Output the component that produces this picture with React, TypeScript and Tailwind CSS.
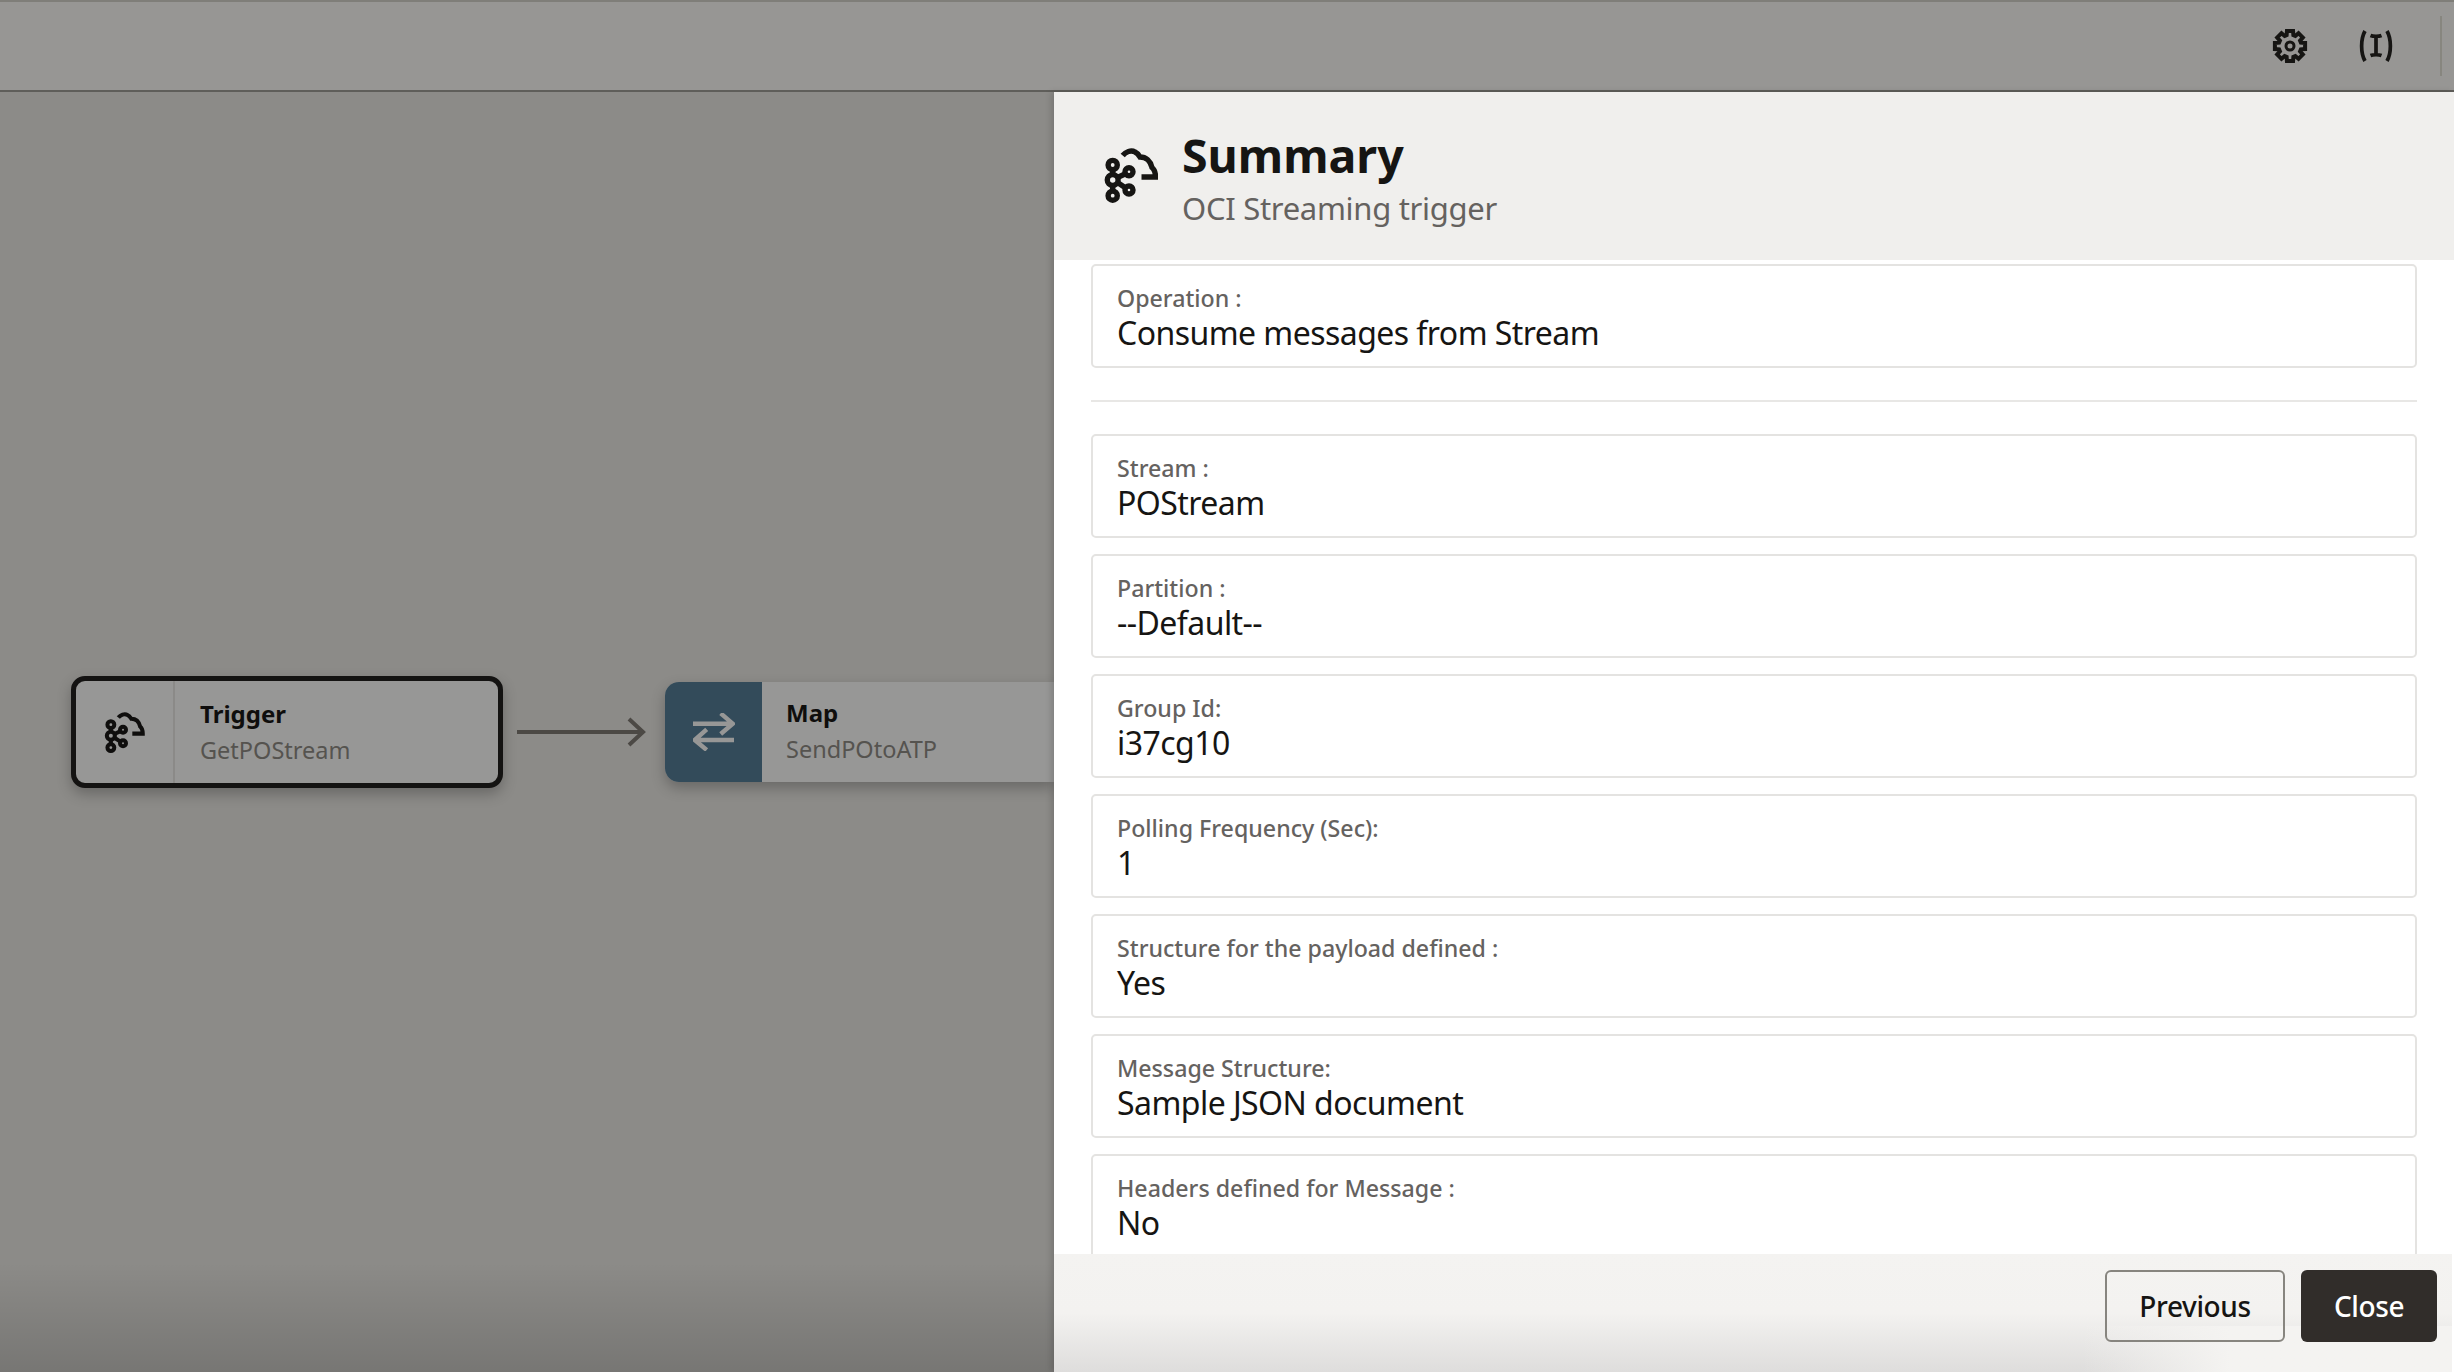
import React from 'react';

const fields = [
  { label: 'Stream :', value: 'POStream' },
  { label: 'Partition :', value: '--Default--' },
  { label: 'Group Id:', value: 'i37cg10' },
  { label: 'Polling Frequency (Sec):', value: '1' },
  { label: 'Structure for the payload defined :', value: 'Yes' },
  { label: 'Message Structure:', value: 'Sample JSON document' },
  { label: 'Headers defined for Message :', value: 'No' },
];

// eight teeth round the centre of a 36 box
const gearPath = Array.from({ length: 8 }, (_, i) => {
  const a = (i * Math.PI) / 4;
  const pt = (r: number, d: number) =>
    `${(18 + r * Math.sin(a + d)).toFixed(2)} ${(18 - r * Math.cos(a + d)).toFixed(2)}`;
  return `${i === 0 ? 'M' : 'L'}${pt(11.4, -0.3)}L${pt(15.4, -0.2)}L${pt(15.4, 0.2)}L${pt(11.4, 0.3)}`;
}).join('') + 'Z';

const StreamIcon = ({ className }: { className: string }) => (
  <svg viewBox="0 0 54 55" fill="none" stroke="currentColor" strokeWidth="5.4" className={className}>
    <circle cx="8.7" cy="17" r="4.6" />
    <circle cx="8.7" cy="32" r="5.4" />
    <circle cx="8.7" cy="47.7" r="4.6" />
    <circle cx="25" cy="23.7" r="4" />
    <circle cx="25" cy="42" r="4" />
    <path d="M8.7 21.5V26.5M8.7 37.5V43M13.5 29.5L21 26M13.5 34.5L21 39.5" />
    <path d="M18.7 7.5C21.5 4 27 1.5 31 4C34 5.5 35 7.5 36 9C42 9 46.5 13 48 19.5C51 22 51.5 26 51.5 29H37.5" />
  </svg>
);

const GearIcon = () => (
  <svg viewBox="0 0 36 36" className="h-9 w-9 text-[#161513]" fill="none" stroke="currentColor">
    <path d={gearPath} strokeWidth="4" strokeLinejoin="miter" />
    <circle cx="18" cy="18" r="4" strokeWidth="3" />
  </svg>
);

const VariableIcon = () => (
  <svg viewBox="0 0 36 34" className="h-[34px] w-9 text-[#161513]" fill="none" stroke="currentColor" strokeWidth="3.7">
    <path d="M7 2C2.5 10 2.5 24 7 32" />
    <path d="M29 2C33.5 10 33.5 24 29 32" />
    <path d="M12.5 6.5C15 7.5 21 7.5 23.5 6.5M18 6.5V26.5M12.5 26.5C15 25.5 21 25.5 23.5 26.5" />
  </svg>
);

const MapIcon = () => (
  <svg viewBox="0 0 42 38" className="h-[38px] w-[42px] text-[#979796]" fill="none" stroke="currentColor" strokeWidth="4.4">
    <path d="M0 10.7H38M27.7 0.3L39.7 10.7L27.7 21" />
    <path d="M41 27H3M13.7 16.3L1.7 27L13.7 37" />
  </svg>
);

const Field = ({ label, value }: { label: string; value: string }) => (
  <div className="h-[104px] shrink-0 rounded-[5px] border-2 border-[#e4e3e1] bg-white px-6 pt-[17px]">
    <div className="text-[23.2px] font-medium leading-[30px] text-[#65625f]">{label}</div>
    <div className="text-[32px] leading-[39px] tracking-[-0.55px] text-[#161513]">{value}</div>
  </div>
);

export default function App() {
  return (
    <div className="flex h-screen w-full flex-col overflow-hidden bg-[#8c8b88] font-['Noto_Sans',sans-serif]">
      <header className="flex h-[92px] shrink-0 items-center justify-end border-y-2 border-t-[#7f7e79] border-b-[#5f5e5a] bg-[#979694]">
        <GearIcon />
        <div className="ml-[50px]"><VariableIcon /></div>
        <div className="ml-[46px] mr-[12px] h-[60px] w-[2px] bg-[#87867f]" />
      </header>

      <div className="flex min-h-0 flex-1">
        {/* Canvas */}
        <div className="relative min-w-0 flex-1 bg-[#8c8b88]">
          <div className="absolute left-[71px] top-[584px] flex h-[112px] w-[432px] rounded-[14px] border-[5px] border-[#141312] bg-[#979796] shadow-[0_6px_14px_rgba(0,0,0,0.25)]">
            <div className="flex w-[99px] shrink-0 items-center justify-center border-r-2 border-[#8b8a88]">
              <StreamIcon className="h-[41px] w-[41px] text-[#0f0e0d]" />
            </div>
            <div className="pl-[25px] pt-[15px]">
              <div className="text-[24px] font-bold leading-[36px] text-[#0f0e0d]">Trigger</div>
              <div className="text-[23.5px] leading-[36px] text-[#55534f]">GetPOStream</div>
            </div>
          </div>

          <svg viewBox="0 0 130 30" fill="none" className="absolute left-[517px] top-[625px] h-[30px] w-[130px] text-[#4c4945]" stroke="currentColor" strokeWidth="4">
            <path d="M0 15H126M112 2L126 15L112 28" />
          </svg>

          <div className="absolute left-[665px] top-[590px] flex h-[100px] w-[389px] overflow-hidden rounded-l-[14px] bg-[#979796] shadow-[0_6px_14px_rgba(0,0,0,0.25)]">
            <div className="flex w-[97px] shrink-0 items-center justify-center bg-[#334b5a]">
              <MapIcon />
            </div>
            <div className="pl-[24px] pt-[13px]">
              <div className="text-[24px] font-bold leading-[36px] text-[#0f0e0d]">Map</div>
              <div className="text-[23.5px] leading-[36px] text-[#55534f]">SendPOtoATP</div>
            </div>
          </div>

          {/* darkening along the bottom of the canvas */}
          <div className="absolute inset-x-0 bottom-0 h-[110px] bg-gradient-to-b from-transparent to-black/15" />
        </div>

        {/* Summary drawer */}
        <aside className="z-10 flex w-[1400px] shrink-0 flex-col bg-white shadow-[-3px_0_6px_rgba(0,0,0,0.15)]">
          <div className="flex h-[168px] shrink-0 bg-[#f0efed] pl-[50px] pt-[56px]">
            <StreamIcon className="h-[55px] w-[54px] shrink-0 text-[#161513]" />
            <div className="ml-[24px] -mt-[24px]">
              <div className="text-[46.5px] font-bold leading-[62px] text-[#161513]">Summary</div>
              <div className="text-[31px] leading-[44px] tracking-[-0.3px] text-[#65625f]">OCI Streaming trigger</div>
            </div>
          </div>

          <div className="flex min-h-0 flex-1 flex-col overflow-hidden pl-[37px] pr-[37px] pt-[4px]">
            <Field label="Operation :" value="Consume messages from Stream" />
            <div className="my-[32px] h-[2px] shrink-0 bg-[#e8e7e5]" />
            <div className="flex flex-col gap-4">
              {fields.map((f) => (
                <Field key={f.label} label={f.label} value={f.value} />
              ))}
            </div>
          </div>

          <div className="relative mr-[2px] flex h-[118px] shrink-0 items-start justify-end gap-4 bg-gradient-to-b from-[#f4f3f1] via-[#f3f2f0] to-[#dedddc] pr-[15px] pt-[16px]">
            <div className="absolute bottom-0 right-0 h-[46px] w-[370px] bg-gradient-to-r from-transparent to-[#f4f3f1] to-40%" />
            <button className="relative h-[72px] w-[180px] rounded-[6px] border-2 border-[#87857f] text-[28px] font-medium tracking-[-0.4px] text-[#161513]">Previous</button>
            <button className="relative h-[72px] w-[136px] rounded-[6px] bg-[#312d2a] text-[28px] font-medium tracking-[-0.4px] text-white">Close</button>
          </div>
        </aside>
      </div>
    </div>
  );
}
